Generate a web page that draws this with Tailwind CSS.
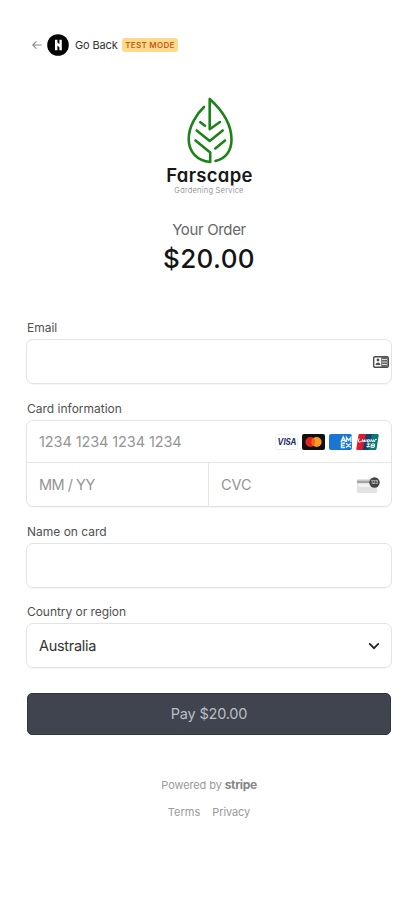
<!DOCTYPE html>
<html lang="en">
<head>
<meta charset="utf-8">
<meta name="viewport" content="width=device-width, initial-scale=1">
<title>Farscape checkout</title>
<script src="https://cdn.jsdelivr.net/npm/@tailwindcss/browser@4"></script>
</head>
<body class="bg-white font-['Inter','Liberation_Sans',sans-serif] text-[#1a1a1a]">
<main class="flex h-[900px] w-[418px] flex-col overflow-hidden px-[26px] pt-[34px]">
  <header class="flex h-[22px] items-center pl-[6px]">
    <svg class="h-[10px] w-[10px]" viewBox="0 0 10 10" fill="none" stroke="#8c8c8c" stroke-width="1.1"><path d="M9.500 5H.8M4.400 1.400.8 5l3.600 3.600"/></svg>
    <svg class="ml-[5px] h-[22px] w-[22px]" viewBox="0 0 22 22"><circle cx="11" cy="11" r="10.800" fill="#050505"/><path d="M9.200 5.800v10.400M13.600 5.800v10.400M9.200 8.800l4.400 4" stroke="#fff" stroke-width="2.400" fill="none"/></svg>
    <span class="ml-[6px] w-[42px] whitespace-nowrap text-[11px] tracking-[-0.15px] text-[#333]">Go Back</span>
    <span class="ml-[5px] flex h-[14px] w-[56px] items-center justify-center whitespace-nowrap rounded-[3px] bg-[#ffd98c] text-[8px] font-semibold tracking-[0.3px] text-[#bd5f1c]">TEST MODE</span>
  </header>

  <section class="flex flex-col items-center pt-[41px]">
    <svg class="h-[67px] w-[48px]" viewBox="0 0 48 67" fill="none" stroke="#1d8217" stroke-width="2.600" stroke-linecap="round" stroke-linejoin="round">
      <path d="M19 10C12 16.500 3.700 29 3.700 42c0 13 8.300 21.500 21.500 23V55.500L10.500 43.500"/>
      <path d="M30.500 64C40.500 62 46.500 54 46.500 42.500 46.500 28 38 14 24.700 2v30.200L35 25"/>
      <path d="M15.300 25.200l4.700 3.600M11.700 33.500L24.700 44l13-10.500M30.300 51.500L40 43.500"/>
    </svg>
    <div class="h-[22px] whitespace-nowrap pl-px text-[18.500px] font-semibold leading-[22px] tracking-[0.3px] text-[#181818] [font-feature-settings:'cv11']">Farscape</div>
    <div class="h-[10px] whitespace-nowrap text-[7.500px] font-light leading-[10px] tracking-[0.25px] text-[#777] [font-feature-settings:'cv11']">Gardening Service</div>
    <div class="mt-[24px] text-[15px] leading-[20px] tracking-[-0.35px] text-[#666]">Your Order</div>
    <div class="mt-[2px] text-[26px] font-medium leading-[34px] tracking-[0.4px] text-[#141414]">$20.00</div>
  </section>

  <form class="mt-[44px] flex flex-col">
    <label class="h-[19px] pl-px text-[12px] leading-[16px] text-[#505050]">Email</label>
    <div class="flex h-[45px] items-center justify-end rounded-[7px] border border-[#e3e3e3] pr-[2px] shadow-[0_1px_1px_rgba(0,0,0,0.04)]">
      <svg class="h-[12px] w-[16px]" viewBox="0 0 16 12"><rect x=".7" y=".7" width="14.600" height="10.600" rx="1.300" fill="#fff" stroke="#4b4b4b" stroke-width="1.400"/><path d="M8.200 1h6.500v10H8.200z" fill="#666"/><circle cx="5" cy="4" r="1.400" fill="#4b4b4b"/><path d="M2.600 9c0-3.400 4.800-3.400 4.800 0z" fill="#4b4b4b"/><path d="M9 3.500h5M9 6h5M9 8.500h5" stroke="#ddd" stroke-width="1"/></svg>
    </div>

    <label class="mt-[17px] h-[19px] pl-px text-[12px] leading-[16px] text-[#505050]">Card information</label>
    <div class="flex h-[87px] flex-col rounded-[7px] border border-[#e3e3e3] shadow-[0_1px_1px_rgba(0,0,0,0.04)]">
      <div class="flex h-[42px] items-center justify-between border-b border-[#e6e6e6] pl-[12px] pr-[12px]">
        <span class="text-[14.500px] tracking-[-0.1px] text-[#949494]">1234 1234 1234 1234</span>
        <span class="flex gap-[4px]">
          <svg class="h-[16px] w-[23px]" viewBox="0 0 23 16"><rect x=".5" y=".5" width="22" height="15" rx="2" fill="#fff" stroke="#f0f0f0"/><text x="2.500" y="11.300" textLength="19" lengthAdjust="spacingAndGlyphs" font-family="Inter" font-size="8.500" font-style="italic" font-weight="700" fill="#1c2f68">VISA</text></svg>
          <svg class="h-[16px] w-[23px]" viewBox="0 0 23 16"><rect width="23" height="16" rx="2" fill="#101010"/><circle cx="8.400" cy="8" r="5" fill="#e52420"/><circle cx="14.600" cy="8" r="5" fill="#f59b22"/><path d="M11.500 4.100a5 5 0 0 1 0 7.800 5 5 0 0 1 0-7.800z" fill="#fa6419"/></svg>
          <svg class="h-[16px] w-[23px]" viewBox="0 0 23 16"><rect width="23" height="16" rx="2" fill="#1976d2"/><path d="M12 8l2.300-5 2.300 5M13 6.500h2.700M17.500 8V3.300l2.200 3 2.200-3V8M16 9.300h-3.500v4.200H16M12.500 11.400h3M17 9.300l5 4.200M22 9.300l-5 4.200" fill="none" stroke="#e8f3fc" stroke-width="1.400"/></svg>
          <svg class="h-[16px] w-[23px]" viewBox="0 0 23 16"><path d="M3.500 0H11L7.500 16H1.500Q0 16 .3 14.500L2.500 1Q2.700 0 3.500 0z" fill="#d9202f"/><path d="M10 0h7l-3.500 16H6.500z" fill="#153f78"/><path d="M16 0h5.500q1.500 0 1.200 1.500L20.500 15q-.2 1-1.200 1h-7z" fill="#087a70"/><path d="M3 4.500l-.6 2.600q0 1.200 1.300 1t1.400-1.200M6 8l.5-2.500L8.200 8l.5-2.500M10.200 5.500L9.700 8M11.500 5.800h2L13 8h-1.800zM14.700 8l.5-2.500L17 8l.5-2.500M18.500 8l.6-2.500h1.500M10.800 10h3.400M10.500 12.500h3.400M12.500 9.500l-.7 4.200M15.500 10h3.200l-.5 3.300h-3.300zM15.200 11.700h3.200" fill="none" stroke="#fff" stroke-width="1"/></svg>
        </span>
      </div>
      <div class="flex flex-1">
        <div class="flex w-[182px] items-center border-r border-[#e6e6e6] pl-[12px] text-[14.500px] tracking-[-0.5px] text-[#949494]">MM / YY</div>
        <div class="flex flex-1 items-center justify-between pl-[12px] pr-[11px] text-[14.500px] tracking-[-0.1px] text-[#949494]">
          <span>CVC</span>
          <svg class="h-[16px] w-[24px]" viewBox="0 0 24 16"><rect x="1" y="2" width="20" height="14" rx="1.500" fill="#e2e2e2"/><path d="M1 4.800h20" stroke="#a5a5a5" stroke-width="2.400"/><path d="M2 8.500h16" stroke="#f5f5f5" stroke-width="2.400"/><circle cx="18.500" cy="5.500" r="5.200" fill="#454545"/><text x="15" y="7.300" textLength="7" lengthAdjust="spacingAndGlyphs" font-family="Inter" font-size="5" font-weight="600" fill="#ddd">123</text></svg>
        </div>
      </div>
    </div>

    <label class="mt-[17px] h-[19px] pl-px text-[12px] leading-[16px] text-[#505050]">Name on card</label>
    <div class="h-[45px] rounded-[7px] border border-[#e3e3e3] shadow-[0_1px_1px_rgba(0,0,0,0.04)]"></div>

    <label class="mt-[16px] h-[19px] pl-px text-[12px] leading-[16px] tracking-[-0.05px] text-[#505050]">Country or region</label>
    <div class="flex h-[45px] items-center justify-between rounded-[7px] border border-[#e3e3e3] pl-[12px] pr-[11px] text-[14.500px] tracking-[-0.3px] text-[#333] shadow-[0_1px_1px_rgba(0,0,0,0.04)]">
      <span>Australia</span>
      <svg class="h-[8px] w-[12px]" viewBox="0 0 12 8" fill="none" stroke="#222" stroke-width="1.700"><path d="M1.200 1.400 6 6.200l4.800-4.800"/></svg>
    </div>

    <button type="button" class="mx-[1px] mt-[25px] h-[42px] rounded-[5px] border border-[#323644] bg-[#40444f] text-[14.500px] tracking-[-0.2px] text-[#bcbec3]">Pay $20.00</button>
  </form>

  <footer class="mt-[42px] flex flex-col items-center text-[11px] leading-[16px] text-[#9a9a9a]">
    <div class="flex items-baseline gap-[3px]"><span class="tracking-[-0.1px]">Powered by</span><span class="text-[12px] font-bold tracking-[-0.35px] text-[#858585]">stripe</span></div>
    <div class="mt-[11px] flex gap-[12px]"><span>Terms</span><span class="tracking-[-0.1px]">Privacy</span></div>
  </footer>
</main>
</body>
</html>
